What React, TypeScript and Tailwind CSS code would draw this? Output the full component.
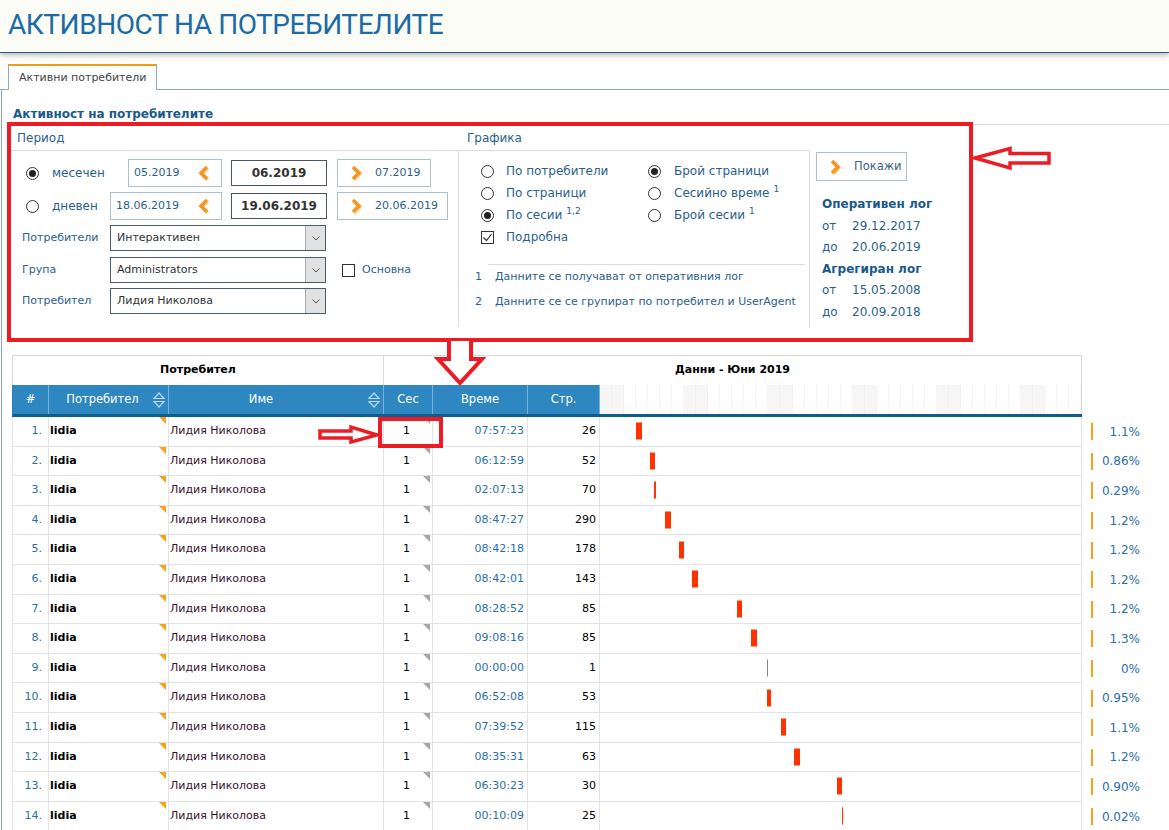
const rows = [
  { t: "07:57:23", p: 26, pct: "1.1%", x: 36, w: 6 },
  { t: "06:12:59", p: 52, pct: "0.86%", x: 50, w: 5 },
  { t: "02:07:13", p: 70, pct: "0.29%", x: 54, w: 2 },
  { t: "08:47:27", p: 290, pct: "1.2%", x: 65, w: 6 },
  { t: "08:42:18", p: 178, pct: "1.2%", x: 79, w: 5 },
  { t: "08:42:01", p: 143, pct: "1.2%", x: 92, w: 6 },
  { t: "08:28:52", p: 85, pct: "1.2%", x: 137, w: 5 },
  { t: "09:08:16", p: 85, pct: "1.3%", x: 151, w: 6 },
  { t: "00:00:00", p: 1, pct: "0%", x: 167, w: 1, zero: true },
  { t: "06:52:08", p: 53, pct: "0.95%", x: 167, w: 4 },
  { t: "07:39:52", p: 115, pct: "1.1%", x: 181, w: 5 },
  { t: "08:35:31", p: 63, pct: "1.2%", x: 194, w: 6 },
  { t: "06:30:23", p: 30, pct: "0.90%", x: 237, w: 5 },
  { t: "00:10:09", p: 25, pct: "0.02%", x: 242, w: 1 },
];

function Radio({ on }: { on?: boolean }) {
  return (
    <span className="w-[13px] h-[13px] rounded-full border border-[#333] bg-white flex items-center justify-center shrink-0">
      {on && <span className="w-[7px] h-[7px] rounded-full bg-[#222]" />}
    </span>
  );
}

function Chevron({ dir }: { dir: "l" | "r" }) {
  const pts = dir === "l" ? "10,2 4,8 10,14" : "4,2 10,8 4,14";
  return (
    <svg width="14" height="16" viewBox="0 0 14 16" className="shrink-0">
      <polyline points={pts} transform="translate(1,1)" fill="none" stroke="#fcd9a8" strokeWidth="3.5" />
      <polyline points={pts} fill="none" stroke="#f7941d" strokeWidth="3.5" />
    </svg>
  );
}

function Select({ value }: { value: string }) {
  return (
    <div className="w-[216px] h-[26px] border border-[#4d5b69] bg-white flex items-stretch">
      <span className="flex-1 flex items-center pl-[6px] text-[#333]">{value}</span>
      <span className="w-[20px] bg-[#e1e1e1] border-l border-[#a9a9a9] flex items-center justify-center">
        <svg width="8" height="5" viewBox="0 0 8 5">
          <polyline points="0.5,0.5 4,4 7.5,0.5" fill="none" stroke="#555" strokeWidth="1" />
        </svg>
      </span>
    </div>
  );
}

function SortIcon() {
  return (
    <svg width="14" height="18" viewBox="0 0 14 18" className="absolute right-[2px] top-1/2 -translate-y-1/2">
      <path d="M2 7.5 L7 2 L12 7.5 Z" fill="none" stroke="#b9d6ec" strokeWidth="1.2" />
      <path d="M2 10.5 L7 16 L12 10.5 Z" fill="none" stroke="#b9d6ec" strokeWidth="1.2" />
    </svg>
  );
}

function Corner({ color }: { color: string }) {
  return (
    <span
      className={`absolute right-[2px] top-0 w-0 h-0 border-t-[7px] border-l-[7px] border-l-transparent ${color}`}
    />
  );
}

export default function App() {
  return (
    <div className="relative w-[1169px] h-[830px] overflow-hidden bg-white font-['DejaVu_Sans',sans-serif] text-[11px] text-[#2b5f8c]">
      <div className="relative z-10 h-[53px] bg-[#fafcf5] border-b border-[#1f5d85] shadow-[0_2px_6px_rgba(0,0,0,0.3)] flex items-center pl-2 pb-[3px]">
        <h1 className="font-['Roboto',sans-serif] text-[28px] leading-none text-[#1d6ba6] tracking-[-0.45px]">
          АКТИВНОСТ НА ПОТРЕБИТЕЛИТЕ
        </h1>
      </div>

      <div className="mt-[11px] flex pl-2 border-b border-[#8fa9ba]">
        <div className="h-[26px] -mb-px w-[149px] border border-[#8fa9ba] border-t-2 border-t-[#f39c12] border-b-0 bg-white flex items-center pl-[10px] text-[#444]">
          Активни потребители
        </div>
      </div>

      <div className="ml-px border-l border-[#8fa9ba] h-[760px]">
        <div className="pt-[16px] pl-[11px] h-[32px] leading-[16px] font-bold text-[12px] text-[#1a5a8a]">
          Активност на потребителите
        </div>

        {/* form */}
        <div className="ml-[5px] mt-[2px] border-t border-[#dcdcdc] flex">
          <div className="w-[451px]">
            <div className="h-[25px] flex items-center pl-[10px] text-[12px]">Период</div>
            <div className="h-[177px] border-t border-[#dcdcdc] pt-[8px] pl-[4px]">
              <div className="flex items-center h-[28px]">
                <span className="ml-[15px]"><Radio on /></span>
                <span className="ml-[13px] w-[76px] text-[12px]">месечен</span>
                <div className="w-[94px] h-[28px] border border-[#aebfd0] flex items-center justify-between pl-[5px] pr-[10px]">
                  <span>05.2019</span>
                  <Chevron dir="l" />
                </div>
                <div className="ml-[9px] w-[96px] h-[26px] border border-[#4b5560] flex items-center justify-center font-bold text-[#333] text-[12px]">
                  06.2019
                </div>
                <div className="ml-[10px] w-[94px] h-[28px] border border-[#aebfd0] flex items-center pl-[11px] gap-[12px]">
                  <Chevron dir="r" />
                  <span>07.2019</span>
                </div>
              </div>
              <div className="flex items-center h-[28px] mt-[5px]">
                <span className="ml-[15px]"><Radio /></span>
                <span className="ml-[13px] w-[58px] text-[12px]">дневен</span>
                <div className="w-[112px] h-[28px] border border-[#aebfd0] flex items-center justify-between pl-[5px] pr-[10px]">
                  <span>18.06.2019</span>
                  <Chevron dir="l" />
                </div>
                <div className="ml-[9px] w-[96px] h-[26px] border border-[#4b5560] flex items-center justify-center font-bold text-[#333] text-[12px]">
                  19.06.2019
                </div>
                <div className="ml-[10px] w-[111px] h-[28px] border border-[#aebfd0] flex items-center pl-[11px] gap-[12px]">
                  <Chevron dir="r" />
                  <span>20.06.2019</span>
                </div>
              </div>
              <div className="flex items-center mt-[5px]">
                <span className="ml-[11px] w-[88px]">Потребители</span>
                <Select value="Интерактивен" />
              </div>
              <div className="flex items-center mt-[6px]">
                <span className="ml-[11px] w-[88px]">Група</span>
                <Select value="Administrators" />
                <span className="ml-[16px] w-[13px] h-[13px] border border-[#333] bg-white" />
                <span className="ml-[7px]">Основна</span>
              </div>
              <div className="flex items-center mt-[5px]">
                <span className="ml-[11px] w-[88px]">Потребител</span>
                <Select value="Лидия Николова" />
              </div>
            </div>
          </div>

          <div className="w-[351px]">
            <div className="h-[25px] flex items-center pl-[9px] text-[12px]">Графика</div>
            <div className="h-[177px] border-t border-l border-[#dcdcdc] pt-[9px]">
              <div className="grid grid-cols-[167px_1fr] pl-[22px]">
                {[
                  ["По потребители", "", false, "Брой страници", "", true],
                  ["По страници", "", false, "Сесийно време", "1", false],
                  ["По сесии", "1,2", true, "Брой сесии", "1", false],
                ].map((r, i) => (
                  <div key={i} className="contents">
                    <div className="h-[22px] flex items-center">
                      <Radio on={r[2] as boolean} />
                      <span className="ml-[12px] text-[12px]">{r[0] as string}</span>
                      {r[1] && <sup className="ml-[4px] text-[9px] -top-[4px]">{r[1] as string}</sup>}
                    </div>
                    <div className="h-[22px] flex items-center">
                      <Radio on={r[5] as boolean} />
                      <span className="ml-[13px] text-[12px]">{r[3] as string}</span>
                      {r[4] && <sup className="ml-[4px] text-[9px] -top-[4px]">{r[4] as string}</sup>}
                    </div>
                  </div>
                ))}
                <div className="h-[22px] flex items-center">
                  <span className="w-[13px] h-[13px] border border-[#333] bg-white flex items-center justify-center">
                    <svg width="11" height="11" viewBox="0 0 11 11">
                      <polyline points="1.5,5.5 4.5,8.5 9.5,2" fill="none" stroke="#333" strokeWidth="1.2" />
                    </svg>
                  </span>
                  <span className="ml-[12px] text-[12px]">Подробна</span>
                </div>
              </div>
              <div className="mt-[16px] ml-[29px] mr-[4px] border-t border-[#dcdcdc]" />
              <div className="h-[25px] flex items-center pl-[16px]">
                <span className="w-[20px]">1</span>
                <span>Данните се получават от оперативния лог</span>
              </div>
              <div className="h-[25px] flex items-center pl-[16px]">
                <span className="w-[20px]">2</span>
                <span>Данните се се групират по потребител и UserAgent</span>
              </div>
            </div>
          </div>

          <div className="flex-1">
            <div className="h-[25px]" />
            <div className="h-[177px] border-l border-[#dcdcdc] pt-[2px] pl-[6px]">
              <div className="w-[91px] h-[29px] border border-[#aebfd0] flex items-center pl-[11px] gap-[12px] text-[11.5px] text-[#3b6184]">
                <Chevron dir="r" />
                <span>Покажи</span>
              </div>
              <div className="mt-[13px] pl-[6px] text-[12px] leading-[21.5px]">
                <div className="font-bold text-[#1a5a8a]">Оперативен лог</div>
                <div className="flex"><span className="w-[30px]">от</span>29.12.2017</div>
                <div className="flex"><span className="w-[30px]">до</span>20.06.2019</div>
                <div className="font-bold text-[#1a5a8a]">Агрегиран лог</div>
                <div className="flex"><span className="w-[30px]">от</span>15.05.2008</div>
                <div className="flex"><span className="w-[30px]">до</span>20.09.2018</div>
              </div>
            </div>
          </div>
        </div>

        {/* table */}
        <div className="mt-[28px] ml-[10px]">
          <div className="flex h-[30px] w-[1070px] border-t border-l border-[#dadada] font-bold text-black">
            <div className="w-[371px] border-r border-[#dadada] flex items-center justify-center">Потребител</div>
            <div className="w-[698px] border-r border-[#dadada] flex items-center justify-center">Данни - Юни 2019</div>
          </div>
          <div className="flex h-[32px] w-[1070px] border-l border-b-[3px] border-l-[#2a7bb3] border-b-[#0b5e8e] text-white text-[11.5px]">
            <div className="w-[36px] bg-[#2f87c1] border-r border-[#79b0d9] flex items-center justify-center">#</div>
            <div className="relative w-[120px] bg-[#2f87c1] border-r border-[#79b0d9] flex items-center justify-center pr-[12px]">
              Потребител
              <SortIcon />
            </div>
            <div className="relative w-[215px] bg-[#2f87c1] border-r border-[#79b0d9] flex items-center justify-center pr-[30px]">
              Име
              <SortIcon />
            </div>
            <div className="w-[49px] bg-[#2f87c1] border-r border-[#79b0d9] flex items-center justify-center">Сес</div>
            <div className="w-[95px] bg-[#2f87c1] border-r border-[#79b0d9] flex items-center justify-center">Време</div>
            <div className="w-[72px] bg-[#2f87c1] border-r border-[#79b0d9] flex items-center justify-center">Стр.</div>
            <div className="w-[482px] border-r border-[#dadada] flex">
              {Array.from({ length: 40 }).map((_, i) => (
                <div
                  key={i}
                  className={`flex-1 border-r border-dotted border-[#ececec] ${i % 7 < 2 ? "bg-[#f6f6f6]" : "bg-white"}`}
                />
              ))}
            </div>
          </div>
          {rows.map((r, i) => (
            <div key={i} className="flex h-[29.6px]">
              <div className="flex w-[1070px] border-l border-b border-[#e3e3e3]">
                <div className="w-[36px] border-r border-[#e3e3e3] flex items-center justify-end pr-[6px] text-[#2a6fa8]">
                  {i + 1}.
                </div>
                <div className="relative w-[120px] border-r border-[#e3e3e3] flex items-center pl-[1px] font-bold text-black">
                  lidia
                  <Corner color="border-t-[#f7a21b]" />
                </div>
                <div className="w-[215px] border-r border-[#e3e3e3] flex items-center pl-[1px] text-[#3a1330]">
                  Лидия Николова
                </div>
                <div className="relative w-[49px] border-r border-[#e3e3e3] flex items-center justify-center text-black pr-[3px]">
                  1
                  <Corner color="border-t-[#a6a6a6]" />
                </div>
                <div className="w-[95px] border-r border-[#e3e3e3] flex items-center justify-end pr-[3px] text-[#2a6fa8]">
                  {r.t}
                </div>
                <div className="w-[72px] border-r border-[#e3e3e3] flex items-center justify-end pr-[3px] text-black">
                  {r.p}
                </div>
                <div className="relative w-[482px] border-r border-[#e3e3e3]">
                  <span
                    className={`absolute top-1/2 -translate-y-1/2 h-[17px] ${r.zero ? "bg-[#888]" : "bg-[#ff3300]"}`}
                    style={{ left: r.x, width: r.w }}
                  />
                </div>
              </div>
              <div className="w-[64px] flex items-center pl-[9px]">
                <span className="w-[2px] h-[17px] bg-[#f7a21b]" />
                <span className="flex-1 text-right pr-[6px] text-[#2a6fa8] text-[12px]">{r.pct}</span>
              </div>
            </div>
          ))}
        </div>
      </div>

      {/* annotations */}
      <div className="absolute left-[7px] top-[122px] w-[966px] h-[220px] border-[4px] border-[#ed1c24] pointer-events-none" />
      <div className="absolute left-[378px] top-[417px] w-[65px] h-[31px] border-[4px] border-[#ed1c24]" />
      <svg className="absolute left-0 top-0" width="1169" height="830" viewBox="0 0 1169 830">
        <path
          d="M975 158 L1010 148.5 L1010 153.5 L1049 153.5 L1049 163 L1010 163 L1010 168 Z"
          fill="white"
          stroke="#ed1c24"
          strokeWidth="3.5"
        />
        <path
          d="M449 341 L449 359 L438 359 L460 383 L482 359 L471 359 L471 341"
          fill="white"
          stroke="#ed1c24"
          strokeWidth="4"
        />
        <path
          d="M320 431 L351 431 L351 427 L377 435 L351 442 L351 438 L320 438 Z"
          fill="white"
          stroke="#ed1c24"
          strokeWidth="3.5"
        />
      </svg>
    </div>
  );
}
